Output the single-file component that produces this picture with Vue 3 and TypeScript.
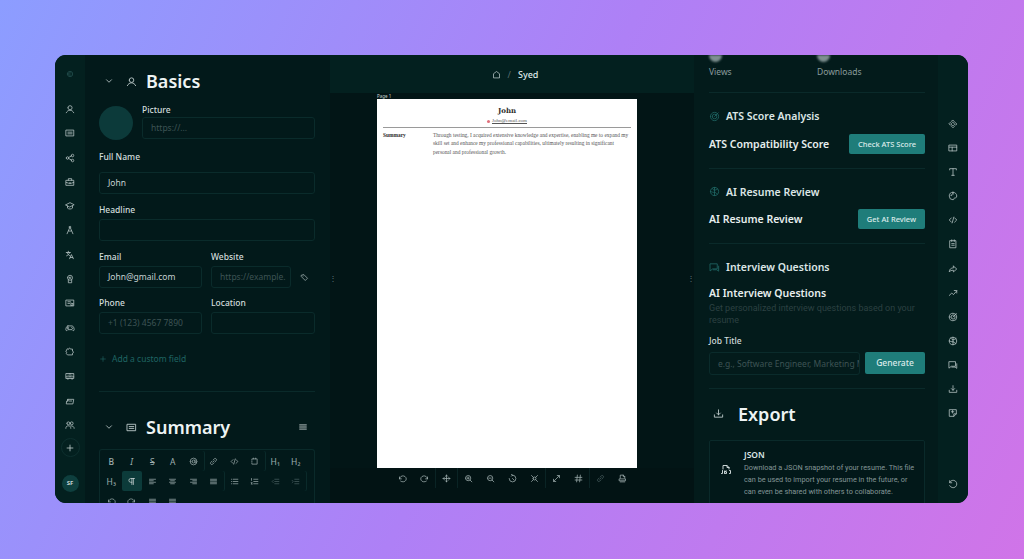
<script setup lang="ts">
const c = (x: number, y: number, r: number) =>
  `M${x - r} ${y}a${r} ${r} 0 1 0 ${r * 2} 0a${r} ${r} 0 1 0 ${-r * 2} 0`

const icons: Record<string, string> = {
  logo: c(12, 12, 8) + 'M15 9.5a4 4 0 1 0 0 5',
  user: c(12, 9, 5) + 'M3 21c2-4 5-6 9-6s7 2 9 6',
  article: 'M3 5h18v14H3zM7 10h10M7 14h10',
  share: c(18, 6, 3) + c(6, 12, 3) + c(18, 18, 3) + 'M9 10.5l6-3M9 13.5l6 3',
  work: 'M3 8h18v12H3zM8 8V4h8v4M3 13l6 2h6l6-2M12 13v3',
  school: 'M2 9l10-5 10 5-10 5zM6 12v5c3 3 9 3 12 0v-5',
  skills: c(12, 5, 2) + 'M11 7L5 21M13 7l6 14M8 14c2 1 6 1 8 0',
  lang: 'M3 6h10M8 3v3M5 6c1 4 4 7 7 8M11 6c-1 4-4 7-7 8M11 21l4.5-10 4.5 10M12.5 18h6',
  award: c(12, 9, 6) + c(12, 9, 2) + 'M8 14v7h8v-7',
  cert: 'M3 5h18v14H3zM7 9h6M7 13h4M15 12l2 2 2-2v6l-2-1-2 1z',
  game: 'M7 7h10c3 0 5 5 5 9 0 3-3 3-5 0H7c-2 3-5 3-5 0 0-4 2-9 5-9zM7 10v4M5 12h4M16 11h.5M18 13h.5',
  puzzle: 'M8 5c0-3 5-3 5 0h5v5c3 0 3 5 0 5v4H6l-3-3c2-2 1-5-1-5l3-6z',
  book: 'M3 6h18v12H3zM3 14h18M12 6v8M7 10h1M16 10h1M7 18v2M17 18v2',
  layers: 'M7 8h14l-2 11H3l1-7h3zM7 8l-1 4M10 12h6',
  people: c(8, 8, 3.5) + c(16, 8, 3.5) + 'M2 20c0-4 2-6 6-6s6 2 6 6M14 14c5 0 8 2 8 6',
  plus: 'M12 5v14M5 12h14',
  tag: 'M4 6l6-2 10 10-6 6L4 10zM8 8h.5',
  chevron: 'M6 9l6 6 6-6',
  menu: 'M4 7h16M4 12h16M4 17h16',
  home: 'M4 20V10l8-6 8 6v10z',
  undo: 'M4 8v5h5M4 13a9 8 0 1 1 3 6',
  redo: 'M20 8v5h-5M20 13a9 8 0 1 0-3 6',
  move: 'M12 3v18M3 12h18M9 6l3-3 3 3M9 18l3 3 3-3M6 9l-3 3 3 3M18 9l3 3-3 3',
  diamonds: 'M12 3l3 3-3 3-3-3zM12 15l3 3-3 3-3-3zM6 9l3 3-3 3-3-3zM18 9l3 3-3 3-3-3z',
  zoomin: c(11, 11, 7) + 'M16 16l5 5M8 11h6M11 8v6',
  zoomout: c(11, 11, 7) + 'M16 16l5 5M8 11h6',
  reset: 'M12 3a9 9 0 1 1-9 9M12 3l-3-2M12 3l-3 3M12 12l4 4',
  fit: c(12, 12, 4) + 'M4 4l5 5M20 4l-5 5M4 20l5-5M20 20l-5-5',
  expand: 'M5 19L19 5M14 4h6v6M4 14v6h6',
  grid: 'M9 3L7 21M17 3l-2 18M3 9h18M3 16h18',
  link: 'M10 14l4-4M8 11l-3 3a3.5 3.5 0 0 0 5 5l3-3M16 13l3-3a3.5 3.5 0 0 0-5-5l-3 3',
  pdf: 'M6 11V3h8l4 4v4M14 3v4h4M4 13h16v5H4zM6 21h12',
  target: c(12, 12, 9) + c(12, 12, 5) + 'M12 12l8-8',
  brain: c(12, 12, 9) + 'M12 3v18M12 9c-3 0-4-2-5-4M12 14c-4 0-6-1-8-2M12 14c3 0 5 2 6 4M12 9c3 0 5-1 7-3',
  chat: 'M3 4h15v11H8l-5 4zM21 9v11l-4-3H9',
  download: 'M12 4v11M8 11l4 4 4-4M3 15v5h18v-5',
  layout: 'M3 5h18v14H3zM3 10h18M10 10v9',
  text: 'M4 7V4h16v3M12 4v16M9 20h6',
  palette: 'M12 3a9 9 0 1 0 0 18c3 0 2-3 3-4s6 1 6-5c0-5-4-9-9-9z' + c(8, 10, 1) + c(12, 7, 1),
  code: 'M8 7l-5 5 5 5M16 7l5 5-5 5M14 5l-4 14',
  note: 'M5 4h14v17H5zM9 2v4M15 2v4M9 11h6M9 15h6',
  forward: 'M13 5l8 7-8 7v-4c-5 0-8 1-10 4 0-6 4-10 10-10z',
  trend: 'M3 18l6-6 4 4 8-9M15 6h6v6',
  fileplus: 'M4 4h16v10l-6 6H4zM14 20v-6h6M8 9h6M11 6v6',
  history: 'M4 8a9 9 0 1 1 0 8M4 4v5h5',
  json: 'M6 10V3h8l4 4v3M14 3v4h4M5 13v6H3M19 13h2v6h-2M9 14v5M13 14h-2v2h2v3h-2',
  at: c(12, 12, 9) + c(12, 12, 4) + 'M16 8v6c0 3 5 2 5-2',
  box: 'M5 7V5h14v14H5v-2M5 10v4M9 5V3M15 5V3',
  alignl: 'M4 6h16M4 10h10M4 14h16M4 18h10',
  alignc: 'M4 6h16M7 10h10M4 14h16M7 18h10',
  alignr: 'M4 6h16M10 10h10M4 14h16M10 18h10',
  alignj: 'M4 6h16M4 10h16M4 14h16M4 18h16',
  ul: 'M9 6h12M9 12h12M9 18h12M4 6h1M4 12h1M4 18h1',
  ol: 'M10 6h11M10 12h11M10 18h11M4 4v5M3 15h3l-3 4h3',
  outdent: 'M10 6h11M10 12h11M10 18h11M6 9l-3 3 3 3',
  indent: 'M10 6h11M10 12h11M10 18h11M3 9l3 3-3 3',
  para: 'M20 4H10a5 5 0 0 0 0 10h3M13 4v16M17 4v16',
}

const leftNav = ['user', 'article', 'share', 'work', 'school', 'skills', 'lang', 'award', 'cert', 'game', 'puzzle', 'book', 'layers', 'people']
const rightNav = ['diamonds', 'layout', 'text', 'palette', 'code', 'note', 'forward', 'trend', 'target', 'brain', 'chat', 'download', 'fileplus']

const toolbar = [
  ['undo', 'redo'],
  ['move'],
  ['zoomin', 'zoomout', 'reset', 'fit'],
  ['expand', 'grid'],
  ['link', 'pdf'],
]

type Tool = { t?: string; i?: string; bold?: boolean; it?: boolean; st?: boolean; on?: boolean; dim?: boolean; sep?: boolean }
const editorTools: Tool[] = [
  { t: 'B', bold: true }, { t: 'I', it: true }, { t: 'S', st: true }, { t: 'A' },
  { i: 'at', sep: true }, { i: 'link' }, { i: 'code' }, { i: 'box', sep: true }, { t: 'H₁' }, { t: 'H₂' },
  { t: 'H₃' }, { i: 'para', on: true }, { i: 'alignl' }, { i: 'alignc' }, { i: 'alignr' }, { i: 'alignj', sep: true },
  { i: 'ul' }, { i: 'ol' }, { i: 'outdent', dim: true }, { i: 'indent', dim: true, sep: true },
  { i: 'undo' }, { i: 'redo' }, { i: 'alignj' }, { i: 'alignj' },
]
</script>

<template>
  <div class="page">
    <div class="window">
      <nav class="rail rail-left">
        <svg class="ico logo" viewBox="0 0 24 24"><path :d="icons.logo" /></svg>
        <svg v-for="n in leftNav" :key="n" class="ico nav-ico" viewBox="0 0 24 24"><path :d="icons[n]" /></svg>
        <div class="add-btn"><svg class="ico" viewBox="0 0 24 24"><path :d="icons.plus" /></svg></div>
        <div class="avatar-sm">SF</div>
      </nav>

      <section class="panel panel-left">
        <div class="sec-head">
          <svg class="ico chev" viewBox="0 0 24 24"><path :d="icons.chevron" /></svg>
          <svg class="ico head-ico" viewBox="0 0 24 24"><path :d="icons.user" /></svg>
          <h2>Basics</h2>
        </div>

        <div class="picture-row">
          <div class="photo"></div>
          <div class="grow">
            <label>Picture</label>
            <div class="input ph pic-input">https://...</div>
          </div>
        </div>

        <label class="lab name-lab">Full Name</label>
        <div class="input name-input">John</div>
        <label class="lab head-lab">Headline</label>
        <div class="input"></div>

        <div class="two">
          <div>
            <label class="lab">Email</label>
            <div class="input">John@gmail.com</div>
          </div>
          <div>
            <label class="lab">Website</label>
            <div class="web-row">
              <div class="input ph grow clip">https://example.</div>
              <svg class="ico tag" viewBox="0 0 24 24"><path :d="icons.tag" /></svg>
            </div>
          </div>
          <div>
            <label class="lab">Phone</label>
            <div class="input ph">+1 (123) 4567 7890</div>
          </div>
          <div>
            <label class="lab">Location</label>
            <div class="input"></div>
          </div>
        </div>

        <div class="add-field">
          <svg class="ico" viewBox="0 0 24 24"><path :d="icons.plus" /></svg>
          <span>Add a custom field</span>
        </div>
        <hr class="rule left-rule" />

        <div class="sec-head summary-head">
          <svg class="ico chev" viewBox="0 0 24 24"><path :d="icons.chevron" /></svg>
          <svg class="ico head-ico" viewBox="0 0 24 24"><path :d="icons.article" /></svg>
          <h2>Summary</h2>
          <svg class="ico sum-menu" viewBox="0 0 24 24"><path :d="icons.menu" /></svg>
        </div>

        <div class="editor">
          <div
            v-for="(tool, idx) in editorTools"
            :key="idx"
            class="ed-btn"
            :class="{ on: tool.on, dim: tool.dim, bold: tool.bold, it: tool.it, st: tool.st, sep: tool.sep }"
          >
            <svg v-if="tool.i" class="ico" viewBox="0 0 24 24"><path :d="icons[tool.i]" /></svg>
            <template v-else>{{ tool.t }}</template>
          </div>
        </div>
      </section>

      <main class="center">
        <header class="crumbs">
          <svg class="ico home" viewBox="0 0 24 24"><path :d="icons.home" /></svg>
          <span class="slash">/</span>
          <span class="doc-name">Syed</span>
        </header>
        <div class="canvas">
          <div class="page-label">Page 1</div>
          <div class="sheet">
            <div class="cv-name">John</div>
            <div class="cv-mail"><i></i><u>John@email.com</u></div>
            <div class="cv-rule"></div>
            <div class="cv-row">
              <b>Summary</b>
              <p>Through testing, I acquired extensive knowledge and expertise, enabling me to expand my skill set and enhance my professional capabilities, ultimately resulting in significant personal and professional growth.</p>
            </div>
          </div>
        </div>
        <div class="dock">
          <div v-for="(group, gi) in toolbar" :key="gi" class="dock-group">
            <svg v-for="n in group" :key="n" class="ico" :class="{ faint: n === 'link' }" viewBox="0 0 24 24"><path :d="icons[n]" /></svg>
          </div>
        </div>
        <span class="grip grip-l">⋮</span>
        <span class="grip grip-r">⋮</span>
      </main>

      <section class="panel panel-right">
        <div class="stats">
          <div><div class="blob"></div>Views</div>
          <div><div class="blob"></div>Downloads</div>
        </div>
        <hr class="rule" />

        <div class="sub-head">
          <svg class="ico teal" viewBox="0 0 24 24"><path :d="icons.target" /></svg>
          <h3>ATS Score Analysis</h3>
        </div>
        <div class="action-row">
          <strong>ATS Compatibility Score</strong>
          <button class="btn">Check ATS Score</button>
        </div>
        <hr class="rule" />

        <div class="sub-head">
          <svg class="ico teal" viewBox="0 0 24 24"><path :d="icons.brain" /></svg>
          <h3>AI Resume Review</h3>
        </div>
        <div class="action-row">
          <strong>AI Resume Review</strong>
          <button class="btn">Get AI Review</button>
        </div>
        <hr class="rule" />

        <div class="sub-head">
          <svg class="ico teal" viewBox="0 0 24 24"><path :d="icons.chat" /></svg>
          <h3>Interview Questions</h3>
        </div>
        <strong class="iq-title">AI Interview Questions</strong>
        <p class="iq-desc">Get personalized interview questions based on your resume</p>
        <label class="lab job-lab">Job Title</label>
        <div class="job-row">
          <div class="input ph grow clip">e.g., Software Engineer, Marketing M</div>
          <button class="btn btn-gen">Generate</button>
        </div>
        <hr class="rule job-rule" />

        <div class="export-head">
          <svg class="ico" viewBox="0 0 24 24"><path :d="icons.download" /></svg>
          <h2>Export</h2>
        </div>
        <div class="card">
          <svg class="ico json" viewBox="0 0 24 24"><path :d="icons.json" /></svg>
          <div>
            <h4>JSON</h4>
            <p>Download a JSON snapshot of your resume. This file can be used to import your resume in the future, or can even be shared with others to collaborate.</p>
          </div>
        </div>
      </section>

      <nav class="rail rail-right">
        <svg v-for="n in rightNav" :key="n" class="ico nav-ico" viewBox="0 0 24 24"><path :d="icons[n]" /></svg>
        <svg class="ico nav-ico history" viewBox="0 0 24 24"><path :d="icons.history" /></svg>
      </nav>
    </div>
  </div>
</template>

<style>
html,
body {
  margin: 0;
  overflow: hidden;
}
</style>

<style scoped>
.page {
  width: 1024px;
  height: 559px;
  box-sizing: border-box;
  padding: 55px 56px 56px 55px;
  background: linear-gradient(115deg, #8c9dff 0%, #ae80f6 50%, #d074e8 100%);
  font-family: "Noto Sans", "Liberation Sans", sans-serif;
}
.window {
  height: 448px;
  display: flex;
  overflow: hidden;
  border-radius: 11px;
  background: #02191a;
  color: #e4ecec;
}
.ico {
  display: block;
  width: 10px;
  height: 10px;
  flex: none;
  fill: none;
  stroke: currentColor;
  stroke-width: 1.9;
  stroke-linecap: round;
  stroke-linejoin: round;
}
.grow {
  flex: 1;
  min-width: 0;
}
.rail {
  flex: none;
  display: flex;
  flex-direction: column;
  align-items: center;
  color: #b4c2c2;
  background: #03201f;
}
.rail-left {
  width: 30px;
  padding: 15px 0 0;
  margin-right: 4px;
}
.logo {
  width: 8px;
  height: 8px;
  color: #2c5c5b;
  margin-bottom: 26px;
}
.nav-ico {
  width: 10px;
  height: 10px;
  margin-bottom: 14.3px;
}
.add-btn {
  width: 17px;
  height: 17px;
  margin-top: -6px;
  border: 1px solid #0d2f2e;
  border-radius: 50%;
  display: flex;
  align-items: center;
  justify-content: center;
  color: #c3d0d0;
}
.avatar-sm {
  width: 17px;
  height: 17px;
  margin-top: 18px;
  border-radius: 50%;
  background: #0e3f3e;
  color: #c6d6d6;
  font-size: 6px;
  font-weight: 700;
  line-height: 17px;
  text-align: center;
}
.rail-right {
  width: 30px;
  padding: 64px 0 0;
}
.rail-right .nav-ico {
  margin-bottom: 14.1px;
}
.rail-right .history {
  margin-top: 47px;
}
.panel {
  flex: none;
  overflow: hidden;
  box-sizing: border-box;
}
.panel-left {
  width: 241px;
  padding: 0 15px 0 10px;
}
.sec-head {
  height: 52px;
  display: flex;
  align-items: center;
}
.sec-head h2 {
  margin: 0;
  font-size: 18px;
  font-weight: 600;
  color: #eef4f4;
}
.chev {
  margin-left: 5px;
  color: #c3d0d0;
}
.head-ico {
  width: 11px;
  height: 11px;
  margin: 0 9px 0 12px;
  color: #c3d0d0;
}
.picture-row {
  display: flex;
  gap: 9px;
  margin-top: -1px;
  height: 40px;
}
.photo {
  width: 34px;
  height: 34px;
  border-radius: 50%;
  background: #0c3a3a;
}
.picture-row label {
  margin-top: -2px;
}
.picture-row label,
.lab {
  display: block;
  font-size: 8.5px;
  line-height: 12px;
  font-weight: 500;
  color: #d3dddd;
}
.pic-input {
  margin-top: 1px;
}
.input {
  box-sizing: border-box;
  height: 22px;
  padding: 0 8px;
  border: 1px solid #0a2b2b;
  border-radius: 3px;
  font-size: 8.5px;
  line-height: 20px;
  color: #c6d2d2;
  white-space: nowrap;
}
.ph {
  color: #3d5354;
}
.clip {
  overflow: hidden;
}
.name-lab {
  margin-top: 5px;
}
.name-input {
  margin-top: 9px;
}
.head-lab {
  margin: 10px 0 3px;
}
.two {
  display: grid;
  grid-template-columns: 103px 104px;
  column-gap: 9px;
  row-gap: 9px;
  margin-top: 10px;
}
.two .lab {
  margin-bottom: 3px;
}
.web-row {
  display: flex;
  align-items: center;
  width: 104px;
}
.web-row .input {
  flex: none;
  width: 80px;
  padding-right: 0;
}
.tag {
  width: 9px;
  height: 9px;
  margin-left: 9px;
  color: #a9b8b8;
}
.add-field {
  display: flex;
  align-items: center;
  gap: 5px;
  margin-top: 19px;
  font-size: 8.5px;
  line-height: 12px;
  color: #1f6462;
}
.add-field .ico {
  width: 8px;
  height: 8px;
}
.rule {
  margin: 0;
  border: 0;
  border-top: 1px solid #0a2a2a;
}
.left-rule {
  margin-top: 26px;
}
.summary-head {
  height: 48px;
  margin-top: 11px;
  margin-bottom: -3px;
}
.sum-menu {
  margin-left: auto;
  margin-right: 7px;
}
.editor {
  display: flex;
  flex-wrap: wrap;
  padding: 1px;
  border: 1px solid #0a2a2a;
  border-bottom: 0;
  border-radius: 3px 3px 0 0;
  margin-top: 1px;
  height: 63px;
  box-sizing: border-box;
  overflow: hidden;
  align-content: flex-start;
}
.ed-btn {
  width: 20.5px;
  height: 20px;
  display: flex;
  align-items: center;
  justify-content: center;
  border-radius: 2px;
  font-size: 8.5px;
  color: #9fafaf;
}
.ed-btn .ico {
  width: 9px;
  height: 9px;
}
.ed-btn.on {
  background: #0c3b3a;
  color: #d3dddd;
}
.ed-btn.dim {
  color: #4a6061;
}
.ed-btn.bold {
  font-weight: 500;
}
.ed-btn.it {
  font-style: italic;
}
.ed-btn.st {
  text-decoration: line-through;
}
.ed-btn.sep {
  box-shadow: 1px 0 0 #0a2a2a;
}
.center {
  position: relative;
  flex: none;
  width: 364px;
  display: flex;
  flex-direction: column;
  background: #021516;
}
.crumbs {
  height: 38px;
  flex: none;
  display: flex;
  align-items: center;
  justify-content: center;
  padding-left: 6px;
  background: #03201f;
  font-size: 9px;
  font-weight: 500;
  color: #dfe8e8;
}
.home {
  width: 9px;
  height: 9px;
  color: #c3d0d0;
}
.slash {
  margin: 0 7px;
  font-weight: 400;
  color: #5a6e6f;
}
.canvas {
  height: 375px;
  flex: none;
  padding-left: 47px;
}
.page-label {
  height: 6px;
  font-size: 4.5px;
  line-height: 6px;
  color: #c3d0d0;
}
.sheet {
  box-sizing: border-box;
  width: 260px;
  height: 369px;
  padding: 7px 6px;
  background: #fff;
  color: #2c2c2c;
  font-family: "Liberation Serif", serif;
}
.cv-name {
  text-align: center;
  font-size: 7px;
  line-height: 9px;
  font-weight: 700;
  font-family: "DejaVu Serif", serif;
}
.cv-mail {
  display: flex;
  justify-content: center;
  align-items: center;
  gap: 2px;
  margin-top: 2px;
  font-size: 5px;
  line-height: 8px;
  color: #555;
}
.cv-mail i {
  width: 3px;
  height: 3px;
  background: #e0707c;
  border-radius: 50%;
}
.cv-rule {
  height: 1px;
  margin-top: 2px;
  background: #9a9a9a;
}
.cv-row {
  display: flex;
  margin-top: 3px;
  font-size: 5.4px;
  line-height: 8.3px;
}
.cv-row b {
  width: 50px;
  flex: none;
}
.cv-row p {
  margin: 0;
  color: #555;
}
.dock {
  flex: 1;
  display: flex;
  justify-content: center;
  background: #021314;
}
.dock-group {
  height: 20px;
  display: flex;
  align-items: center;
  gap: 13px;
  padding: 0 6px;
  border-left: 1px solid #0a2425;
  color: #a9b8b8;
}
.dock-group:first-child {
  border-left: 0;
}
.dock-group .ico {
  width: 9px;
  height: 9px;
}
.dock-group .faint {
  color: #4a6061;
}
.grip {
  position: absolute;
  top: 218px;
  font-size: 8px;
  line-height: 10px;
  color: #607677;
}
.grip-l {
  left: -1px;
}
.grip-r {
  right: -1px;
}
.panel-right {
  width: 244px;
  padding: 0 13px 0 15px;
  background: #031b1b;
}
.stats {
  height: 37px;
  display: grid;
  grid-template-columns: 108px 1fr;
  font-size: 8.5px;
  line-height: 12px;
  color: #8b9c9d;
}
.blob {
  width: 13px;
  height: 7px;
  margin: 0 0 4px;
  border-radius: 0 0 7px 7px;
  background: #7e9090;
  filter: blur(1px);
}
.sub-head {
  display: flex;
  align-items: center;
  gap: 6px;
  height: 17px;
  margin-top: 14.5px;
}
.sub-head h3 {
  margin: 0;
  font-size: 10.5px;
  font-weight: 600;
  color: #dce6e6;
}
.teal {
  color: #1f6462;
  width: 11px;
  height: 11px;
}
.action-row {
  display: flex;
  align-items: center;
  justify-content: space-between;
  margin-top: 9px;
  height: 20px;
  margin-bottom: 14px;
}
.action-row strong,
.iq-title {
  font-size: 10.5px;
  font-weight: 600;
  color: #e7eeee;
}
.btn {
  height: 20px;
  padding: 0 9px;
  border: 0;
  border-radius: 2px;
  background: #1f7d7a;
  color: #dcebea;
  font: 500 7.5px "Noto Sans", "Liberation Sans", sans-serif;
}
.iq-title {
  display: block;
  line-height: 14px;
  margin-top: 10px;
}
.iq-desc {
  margin: 2px 0 0;
  font-family: Roboto, sans-serif;
  font-size: 9px;
  line-height: 12.3px;
  color: #2c4142;
}
.job-lab {
  margin-top: 8.5px;
}
.job-row {
  display: flex;
  gap: 5px;
  margin-top: 5px;
}
.job-row .input {
  height: 23px;
  line-height: 21px;
}
.btn-gen {
  flex: none;
  width: 60px;
  height: 22px;
  font-size: 8.5px;
}
.job-rule {
  margin-top: 13px;
}
.export-head {
  display: flex;
  align-items: center;
  height: 50px;
  margin-bottom: 1px;
  padding-left: 4px;
}
.export-head .ico {
  width: 11px;
  height: 11px;
  margin-right: 14px;
  color: #c3d0d0;
}
.export-head h2 {
  margin: 0;
  font-size: 18px;
  font-weight: 600;
  color: #eef4f4;
}
.card {
  display: flex;
  align-items: flex-start;
  gap: 12px;
  padding: 8px 7px 8px 10px;
  border: 1px solid #0a2a2a;
  border-radius: 2px;
  background: #021819;
}
.json {
  width: 12px;
  height: 12px;
  margin-top: 15px;
  color: #d3dddd;
}
.card h4 {
  margin: 0 0 1px;
  font-size: 8.5px;
  line-height: 12px;
  font-weight: 600;
  color: #dce6e6;
}
.card p {
  margin: 0;
  font-family: Roboto, sans-serif;
  font-size: 7.3px;
  line-height: 12px;
  color: #839596;
}
</style>
